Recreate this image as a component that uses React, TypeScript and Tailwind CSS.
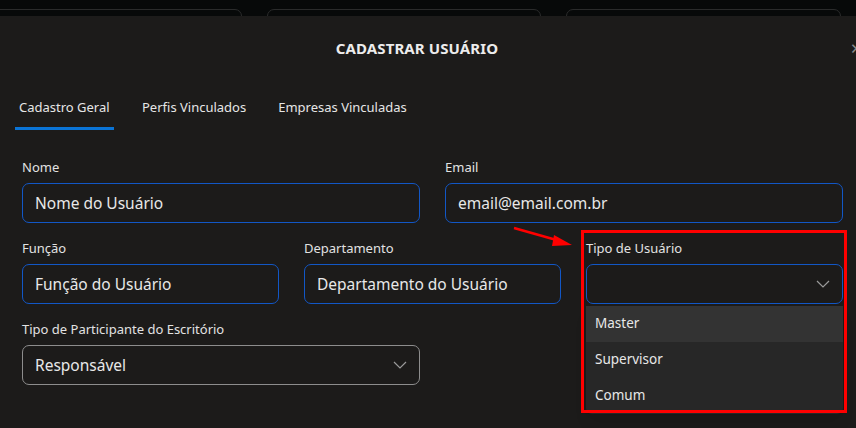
import React from "react";

const font = { fontFamily: '"Noto Sans", "Open Sans", sans-serif' };

function Chevron() {
  return (
    <svg width="14" height="8" viewBox="0 0 14 8" fill="none" className="text-[#9a9a9a]">
      <path d="M1 1l6 6 6-6" stroke="currentColor" strokeWidth="1.2" />
    </svg>
  );
}

function Field({ label, value, children }: { label: string; value?: string; children?: React.ReactNode }) {
  return (
    <div className="flex flex-col">
      <label className="text-[13px] leading-[18px] text-[#e2e2e2] h-[18px] mb-[7px]">{label}</label>
      {children ?? (
        <div className="h-[40px] rounded-[7px] border border-[#1257c6] flex items-center px-[12px] pt-[2px] text-[15.5px] text-[#e8e8e8]">
          {value}
        </div>
      )}
    </div>
  );
}

export default function App() {
  return (
    <div className="w-[856px] h-[428px] overflow-hidden bg-[#070909] relative" style={font}>
      <div className="h-[16px] relative flex">
        <div className="mt-[9px] ml-[-20px] w-[262px] h-[20px] rounded-t-[7px] border border-[#2a2b2b]" />
        <div className="mt-[9px] ml-[25px] w-[274px] h-[20px] rounded-t-[7px] border border-[#2a2b2b]" />
        <div className="mt-[9px] ml-[25px] w-[275px] h-[20px] rounded-t-[7px] border border-[#2a2b2b]" />
      </div>
      <div className="relative bg-[#1c1b1a] h-[412px]">
        <div className="h-[64px] flex items-center justify-center pr-[22px]">
          <h1 className="text-[15px] font-bold text-[#ececec] tracking-[0.1px]">CADASTRAR USUÁRIO</h1>
        </div>
        <div className="absolute right-[-7px] top-[23px] text-[#8a8a8a] text-[15px] leading-[18px]">✕</div>
        <div className="flex pl-[15px] mt-[14px] gap-[14px] text-[13px] text-[#e6e6e6]">
          <div className="flex flex-col items-stretch">
            <span className="px-[4px] h-[26px] leading-[26px]">Cadastro Geral</span>
            <span className="mt-[7px] h-[2.5px] bg-[#0a74d6] w-[99px]" />
          </div>
          <span className="px-[4px] h-[26px] leading-[26px] ml-[10px]">Perfis Vinculados</span>
          <span className="px-[4px] h-[26px] leading-[26px] ml-[10px]">Empresas Vinculadas</span>
        </div>
        <div className="pl-[22px] w-[843px] mt-[28px] flex flex-col gap-[16px]">
          <div className="grid grid-cols-2 gap-[25px]">
            <Field label="Nome" value="Nome do Usuário" />
            <Field label="Email" value="email@email.com.br" />
          </div>
          <div className="grid grid-cols-3 gap-[25px]">
            <Field label="Função" value="Função do Usuário" />
            <Field label="Departamento" value="Departamento do Usuário" />
            <div className="relative">
              <Field label="Tipo de Usuário">
                <div className="h-[40px] rounded-[7px] border border-[#1257c6] flex items-center justify-end px-[12px]">
                  <Chevron />
                </div>
              </Field>
              <div className="absolute left-0 right-0 top-[67px] bg-[#272727] rounded-b-[6px] text-[13.5px] text-[#e8e8e8] shadow-lg">
                <div className="h-[36px] bg-[#333333] flex items-center px-[9px]">Master</div>
                <div className="h-[36px] flex items-center px-[9px]">Supervisor</div>
                <div className="h-[36px] flex items-center px-[9px]">Comum</div>
              </div>
            </div>
          </div>
          <div className="grid grid-cols-2 gap-[25px]">
            <Field label="Tipo de Participante do Escritório">
              <div className="h-[40px] rounded-[7px] border border-[#8d8d8d] flex items-center justify-between px-[12px] text-[15.5px] text-[#e8e8e8]">
                <span className="pt-[2px]">Responsável</span>
                <Chevron />
              </div>
            </Field>
          </div>
        </div>
      </div>
      <div className="absolute left-[581px] top-[230px] w-[266px] h-[183px] border-[3px] border-[#ff0000] pointer-events-none" />
      <svg className="absolute left-0 top-0 pointer-events-none" width="856" height="428">
        <line x1="514" y1="228" x2="560" y2="241" stroke="#ff0000" strokeWidth="2.5" />
        <polygon points="572,245 554,235 552,246" fill="#ff0000" />
      </svg>
    </div>
  );
}
